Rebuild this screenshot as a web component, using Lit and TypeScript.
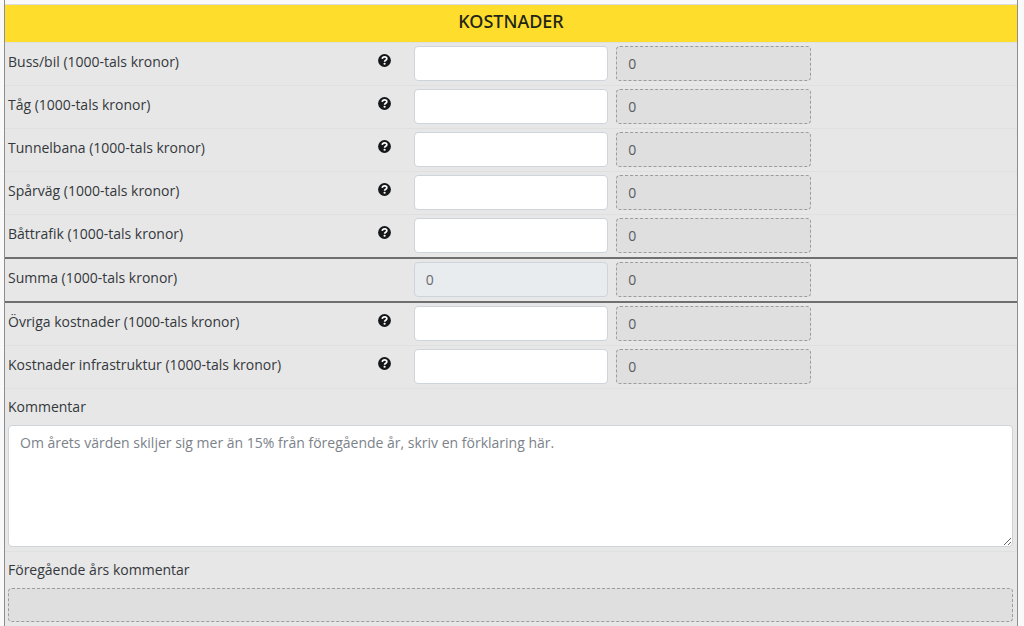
import { LitElement, html, css, nothing } from "lit";
import { customElement } from "lit/decorators.js";
import { classMap } from "lit/directives/class-map.js";

interface CostRow {
  id: string;
  label: string;
  help: boolean;
  total?: boolean;
}

const rows: CostRow[] = [
  { id: "buss", label: "Buss/bil (1000-tals kronor)", help: true },
  { id: "tag", label: "Tåg (1000-tals kronor)", help: true },
  { id: "tunnelbana", label: "Tunnelbana (1000-tals kronor)", help: true },
  { id: "sparvag", label: "Spårväg (1000-tals kronor)", help: true },
  { id: "bat", label: "Båttrafik (1000-tals kronor)", help: true },
  { id: "summa", label: "Summa (1000-tals kronor)", help: false, total: true },
  { id: "ovriga", label: "Övriga kostnader (1000-tals kronor)", help: true },
  { id: "infra", label: "Kostnader infrastruktur (1000-tals kronor)", help: true },
];

@customElement("app-root")
export class AppRoot extends LitElement {
  static styles = css`
    :host {
      display: block;
      background: #f9f9f9;
      color: #34383c;
      font-family: "Open Sans", "Noto Sans", sans-serif;
      font-size: 14px;
      line-height: 22px;
    }
    * {
      box-sizing: border-box;
    }
    .sheet {
      margin: 0 6px 0 4px;
      padding-top: 4px;
      border: solid #8e8e8e;
      border-width: 0 1px;
    }
    .section {
      background: #e7e7e7;
      border-top: 1px solid #dedede;
    }
    .title {
      margin: 0;
      padding: 3px 4px 8px;
      background: #ffdd2d;
      color: #212516;
      font-family: "Noto Sans", "Open Sans", sans-serif;
      font-size: 18px;
      line-height: 26px;
      font-weight: 500;
      text-align: center;
    }
    .row {
      display: grid;
      grid-template-columns: 2fr 1fr 1fr 1fr;
      border-top: 1px solid #e0e0e0;
    }
    .row.total,
    .row.total + .row {
      border-top: 2px solid #6f6f6f;
    }
    .cell {
      min-width: 0;
      padding: 3px 4px 4px;
    }
    .name {
      display: flex;
      justify-content: space-between;
      align-items: flex-start;
      padding: 8px 19px 0 3px;
    }
    .help {
      display: block;
      margin-top: 3px;
      padding: 0;
      border: 0;
      background: none;
      color: #15181b;
      line-height: 0;
    }
    .help svg {
      width: 13px;
      height: 13px;
    }
    .field {
      display: block;
      width: 100%;
      height: 35px;
      margin: 0;
      padding: 6px 11px;
      border: 1px solid #ced4da;
      border-radius: 4px;
      background: #fff;
      color: #495057;
      font: inherit;
      outline: none;
    }
    .field.sum {
      background: #e9ecef;
      color: #666b70;
    }
    .field.previous {
      border: 1px dashed #9c9c9c;
      background: #dfdfdf;
      color: #5a5d60;
    }
    .note {
      padding: 7px 4px 4px 3px;
      border-top: 1px solid #e0e0e0;
    }
    .note label {
      display: block;
      margin-bottom: 7px;
    }
    textarea.field {
      height: 122px;
      resize: vertical;
    }
    textarea.field.previous {
      height: 34px;
      resize: none;
    }
    .field::placeholder {
      color: #7b8289;
      opacity: 1;
    }
  `;

  private helpIcon() {
    return html`<button class="help" type="button" aria-label="Hjälp">
      <svg viewBox="0 0 512 512" aria-hidden="true">
        <circle cx="256" cy="256" r="252" fill="currentColor" />
        <path
          d="M166 190c8-52 44-76 92-76 54 0 90 30 90 72 0 62-88 58-88 120"
          fill="none"
          stroke="#fff"
          stroke-width="66"
        />
        <circle cx="260" cy="384" r="44" fill="#fff" />
      </svg>
    </button>`;
  }

  private costRow(row: CostRow) {
    return html`<div class=${classMap({ row: true, total: !!row.total })}>
      <div class="cell name">
        <label for=${row.id}>${row.label}</label>
        ${row.help ? this.helpIcon() : nothing}
      </div>
      <div class="cell">
        <input
          id=${row.id}
          class=${classMap({ field: true, sum: !!row.total })}
          type="text"
          inputmode="numeric"
          .value=${row.total ? "0" : ""}
          ?readonly=${!!row.total}
        />
      </div>
      <div class="cell">
        <input class="field previous" type="text" aria-label=${row.label} .value=${"0"} readonly />
      </div>
    </div>`;
  }

  render() {
    return html`<form class="sheet">
      <section class="section">
        <h2 class="title">KOSTNADER</h2>
        ${rows.map((row) => this.costRow(row))}
        <div class="note">
          <label for="kommentar">Kommentar</label>
          <textarea
            id="kommentar"
            class="field"
            placeholder="Om årets värden skiljer sig mer än 15% från föregående år, skriv en förklaring här."
          ></textarea>
        </div>
        <div class="note">
          <label for="foregaende">Föregående års kommentar</label>
          <textarea id="foregaende" class="field previous" readonly></textarea>
        </div>
      </section>
    </form>`;
  }
}
